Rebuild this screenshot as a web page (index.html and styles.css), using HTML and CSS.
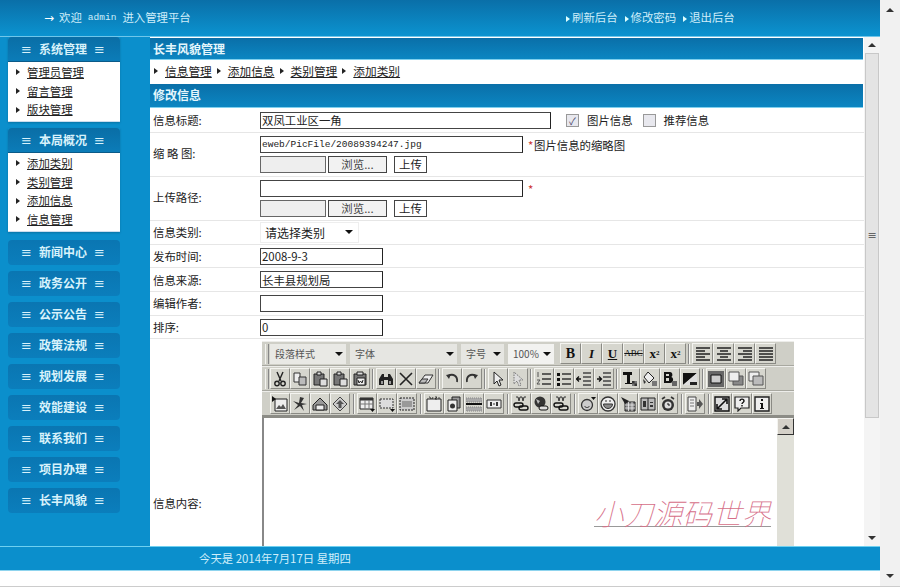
FILE: index.html
```html
<!DOCTYPE html>
<html>
<head>
    <meta charset="utf-8">
    <title>长丰风貌管理</title>
    <link rel="stylesheet" href="styles.css">
</head>
<body>
    <!-- toolbar icons -->
    <svg class="defs" xmlns="http://www.w3.org/2000/svg">
        <symbol id="i-cut" viewBox="0 0 16 16"><path d="M5 1l4 9M11 1l-4 9" fill="none" stroke="#222" stroke-width="1.4"/><circle cx="5" cy="12.5" r="2.2" fill="none" stroke="#222" stroke-width="1.4"/><circle cx="11" cy="12.5" r="2.2" fill="none" stroke="#222" stroke-width="1.4"/></symbol>
        <symbol id="i-copy" viewBox="0 0 16 16"><path d="M2 2h6v9H2z" fill="#eee" stroke="#333"/><path d="M7 6h7v8H7z" fill="#bbb" stroke="#333"/></symbol>
        <symbol id="i-paste" viewBox="0 0 16 16"><path d="M2 3h10v11H2z" fill="#777" stroke="#222"/><path d="M5 1h4v3H5z" fill="#ddd" stroke="#222"/><path d="M8 8h7v7H8z" fill="#ddd" stroke="#222"/></symbol>
        <symbol id="i-pastew" viewBox="0 0 16 16"><path d="M2 3h12v11H2z" fill="#777" stroke="#222"/><path d="M5 1h6v3H5z" fill="#ddd" stroke="#222"/><path d="M5 7h8v7H5z" fill="#eee" stroke="#222"/><path d="M6 9l1 3 1.500-2 1.500 2 1-3" fill="none" stroke="#222"/></symbol>
        <symbol id="i-find" viewBox="0 0 16 16"><path d="M1 14V8l3-5h2v3h4V3h2l3 5v6H10V9H6v5z" fill="#222"/><path d="M3 10h2v3H3zM11 10h2v3h-2z" fill="#999"/></symbol>
        <symbol id="i-del" viewBox="0 0 16 16"><path d="M2 2l12 12M14 2L2 14" stroke="#222" stroke-width="1.600"/></symbol>
        <symbol id="i-erase" viewBox="0 0 16 16"><path d="M1 12l6-8h8l-5 8z" fill="#eee" stroke="#333"/><path d="M1 12l3-4h6l-3 4z" fill="#bbb" stroke="#333"/></symbol>
        <symbol id="i-undo" viewBox="0 0 16 16"><path d="M4 5c5-3 10 0 9 6" fill="none" stroke="#333" stroke-width="1.800"/><path d="M2 4l5-1-2 5z" fill="#333"/></symbol>
        <symbol id="i-redo" viewBox="0 0 16 16"><path d="M12 5C7 2 2 5 3 11" fill="none" stroke="#333" stroke-width="1.800"/><path d="M14 4L9 3l2 5z" fill="#333"/></symbol>
        <symbol id="i-arrow" viewBox="0 0 16 16"><path d="M4 1v12l3-3 2 5 2-1-2-5h4z" fill="#eee" stroke="#222"/></symbol>
        <symbol id="i-arrowd" viewBox="0 0 16 16"><path d="M4 1v12l3-3 2 5 2-1-2-5h4z" fill="#ddd" stroke="#777" stroke-dasharray="1.500 1"/></symbol>
        <symbol id="i-ol" viewBox="0 0 16 16"><path d="M6 3h9M6 8h9M6 13h9" stroke="#333" stroke-width="1.500"/><path d="M2 1v5M1 9h3l-3 4h3" fill="none" stroke="#555"/></symbol>
        <symbol id="i-ul" viewBox="0 0 16 16"><path d="M6 3h9M6 8h9M6 13h9" stroke="#333" stroke-width="1.500"/><path d="M1 2h3v3H1zM1 7h3v3H1zM1 12h3v3H1z" fill="#111"/></symbol>
        <symbol id="i-out" viewBox="0 0 16 16"><path d="M7 2h8M7 6h8M7 10h8M7 14h8" stroke="#444" stroke-width="1.300"/><path d="M5 8L1 8M3 5.500L.5 8 3 10.500" fill="none" stroke="#111" stroke-width="1.300"/></symbol>
        <symbol id="i-in" viewBox="0 0 16 16"><path d="M7 2h8M7 6h8M7 10h8M7 14h8" stroke="#444" stroke-width="1.300"/><path d="M1 8h4M3 5.500L5.500 8 3 10.500" fill="none" stroke="#111" stroke-width="1.300"/></symbol>
        <symbol id="i-tcol" viewBox="0 0 16 16"><path d="M1 1h9v3H8v8h2v1H3v-1h2V4H3v0H1z" fill="#111"/><path d="M10 10h5v5h-5z" fill="#777"/><path d="M10 10h2.500v2.500H10zM12.500 12.500H15V15h-2.500z" fill="#333"/></symbol>
        <symbol id="i-fill" viewBox="0 0 16 16"><path d="M6 1l6 6-5 5-5-6z" fill="#eee" stroke="#222"/><path d="M10 10h5v5h-5z" fill="#777"/><path d="M1 8l1 5 2-2z" fill="#333"/></symbol>
        <symbol id="i-bcol" viewBox="0 0 16 16"><path d="M2 1h6c3 0 3 5 1 5 3 0 3 6-1 6H2zM4 3v2h3V3zM4 7v3h3V7z" fill="#111" fill-rule="evenodd"/><path d="M10 10h5v5h-5z" fill="#666"/></symbol>
        <symbol id="i-bw" viewBox="0 0 16 16"><path d="M1 2h14L1 14z" fill="#111"/><path d="M15 2v12H1z" fill="#ddd"/><path d="M8 11h7v3H8z" fill="#222"/></symbol>
        <symbol id="i-abs" viewBox="0 0 16 16"><path d="M0 0h16v16H0z" fill="#666"/><path d="M3 4h10v8H3z" fill="#ccc" stroke="#111"/></symbol>
        <symbol id="i-front" viewBox="0 0 16 16"><path d="M5 5h10v9H5z" fill="#888" stroke="#555"/><path d="M1 1h10v9H1z" fill="#eee" stroke="#555"/></symbol>
        <symbol id="i-back" viewBox="0 0 16 16"><path d="M1 1h10v9H1z" fill="#eee" stroke="#555"/><path d="M5 5h10v9H5z" fill="#bbb" stroke="#555"/></symbol>
        <symbol id="i-img" viewBox="0 0 16 16"><path d="M3 3h12v12H3z" fill="#eee" stroke="#222"/><path d="M4 13l3-4 2 2 2-3 3 5z" fill="#555"/><path d="M0 0l4 3-4 3z" fill="#111"/></symbol>
        <symbol id="i-flash" viewBox="0 0 16 16"><path d="M8 1l-1 6-6-2 5 4-4 5 6-4 4 5-2-6 5-1-6-1 3-5z" fill="#333"/></symbol>
        <symbol id="i-media" viewBox="0 0 16 16"><path d="M1 9l7-7 7 7v5H1z" fill="#999" stroke="#222"/><path d="M4 9h8v5H4z" fill="#eee" stroke="#222"/></symbol>
        <symbol id="i-up" viewBox="0 0 16 16"><path d="M8 1l7 7-7 7-7-7z" fill="#ccc" stroke="#444"/><path d="M8 4l4 4H9.500v4h-3V8H4z" fill="#555"/></symbol>
        <symbol id="i-table" viewBox="0 0 16 16"><path d="M1 2h13v11H1z" fill="#eee" stroke="#222"/><path d="M1 2h13v2.500H1z" fill="#333"/><path d="M1 8h13M6 4v9M10 4v9" stroke="#777"/><path d="M11 13h5l-2.500 3z" fill="#111"/></symbol>
        <symbol id="i-form" viewBox="0 0 16 16"><path d="M1 3h13v9H1z" fill="#ddd" stroke="#333" stroke-dasharray="2 1"/><path d="M11 13h5l-2.500 3z" fill="#111"/></symbol>
        <symbol id="i-fieldset" viewBox="0 0 16 16"><path d="M1 2h14v12H1z" fill="#ccc" stroke="#222" stroke-dasharray="2 1"/><path d="M3 6h10M3 8h10M3 10h10" stroke="#666"/></symbol>
        <symbol id="i-frame" viewBox="0 0 16 16"><path d="M1 3h14v12H1z" fill="#eee" stroke="#222"/><path d="M3 1h1l1 2M7 1l-1 2M9 1h2l-2 2h2M13 1v2" fill="none" stroke="#222" stroke-width=".8"/></symbol>
        <symbol id="i-doc" viewBox="0 0 16 16"><path d="M6 1h8v11H6z" fill="#999" stroke="#222"/><path d="M2 4h9v11H2z" fill="#eee" stroke="#222"/><circle cx="6.500" cy="10" r="2.500" fill="#333"/></symbol>
        <symbol id="i-hr" viewBox="0 0 16 16"><path d="M0 2h16v4H0z" fill="#aaa" stroke="#888" stroke-dasharray="1 1"/><path d="M0 8h16" stroke="#111" stroke-width="2"/><path d="M0 11h16v4H0z" fill="#aaa" stroke="#888" stroke-dasharray="1 1"/></symbol>
        <symbol id="i-field" viewBox="0 0 16 16"><path d="M1 4h14v8H1z" fill="#eee" stroke="#333"/><path d="M4 6h2v4H4zM10 6h2v4h-2z" fill="#333"/><path d="M7 8h2" stroke="#333"/></symbol>
        <symbol id="i-link" viewBox="0 0 16 16"><path d="M3 1h2l1 4 1-4h2l1 4 1-4h2" fill="none" stroke="#333"/><rect x="1" y="7" width="9" height="4" rx="2" fill="none" stroke="#111" stroke-width="1.400"/><rect x="6" y="10" width="9" height="4" rx="2" fill="none" stroke="#111" stroke-width="1.400"/></symbol>
        <symbol id="i-globe" viewBox="0 0 16 16"><circle cx="7" cy="6" r="5.500" fill="#333"/><path d="M3 3l4 2-2 3z" fill="#bbb"/><rect x="6" y="10" width="9" height="4" rx="2" fill="#ddd" stroke="#111"/></symbol>
        <symbol id="i-emoji" viewBox="0 0 16 16"><circle cx="7" cy="9" r="5.500" fill="#ccc" stroke="#333" stroke-width="1.300"/><path d="M4.500 10c1 2 4 2 5 0" fill="none" stroke="#333"/><path d="M11 1h5l-2.500 3z" fill="#111"/></symbol>
        <symbol id="i-smile" viewBox="0 0 16 16"><circle cx="8" cy="8" r="7" fill="#eee" stroke="#333" stroke-width="1.300"/><path d="M3.500 8h9c0 6-9 6-9 0z" fill="#888" stroke="#333"/><path d="M5 5h2M9 5h2" stroke="#333"/></symbol>
        <symbol id="i-calc" viewBox="0 0 16 16"><path d="M5 6h10v9H5z" fill="#888" stroke="#222"/><path d="M5 9h10M5 12h10M8.500 6v9M12 6v9" stroke="#eee" stroke-width=".8"/><path d="M1 1l8 4-4 3z" fill="#222"/></symbol>
        <symbol id="i-swap" viewBox="0 0 16 16"><path d="M1 2h14v12H1z" fill="#bbb" stroke="#222"/><path d="M8 2v12" stroke="#222"/><path d="M3 5h3v6H3zM10 6h3v1h-3zM10 9h3v2h-3z" fill="#333"/></symbol>
        <symbol id="i-clock" viewBox="0 0 16 16"><circle cx="8" cy="9" r="6" fill="#333"/><circle cx="8" cy="9" r="3.500" fill="#ddd"/><path d="M8 7v2h2" stroke="#111" fill="none"/><path d="M2 3l3-2M14 3l-3-2" stroke="#333" stroke-width="1.600"/></symbol>
        <symbol id="i-export" viewBox="0 0 16 16"><path d="M1 1h8v14H1z" fill="#eee" stroke="#444"/><path d="M3 4h4M3 7h4M3 10h4" stroke="#777"/><path d="M10 6h2V3l4 5-4 5v-3h-2z" fill="#555"/></symbol>
        <symbol id="i-resize" viewBox="0 0 16 16"><path d="M1 1h14v14H1z" fill="#ddd" stroke="#111" stroke-width="1.400"/><path d="M3 13L13 3M8 3h5v5M3 8v5h5" fill="none" stroke="#111" stroke-width="1.600"/></symbol>
        <symbol id="i-help" viewBox="0 0 16 16"><path d="M1 1h14v11H7l-3 3v-3H1z" fill="#eee" stroke="#222" stroke-width="1.200"/><path d="M6 5c0-2.500 4-2.500 4 0 0 1.500-2 1.500-2 3M8 9v1.500" fill="none" stroke="#111" stroke-width="1.400"/></symbol>
        <symbol id="i-info" viewBox="0 0 16 16"><path d="M1 1h14v14H1z" fill="#eee" stroke="#222" stroke-width="1.400"/><path d="M7 3h2v2H7zM6 7h3v5h1v1H6v-1h1V8H6z" fill="#111"/></symbol>
        <symbol id="i-left" viewBox="0 0 16 16"><path d="M1 2h14M1 5h9M1 8h14M1 11h9M1 14h14" stroke="#222" stroke-width="1.400"/></symbol>
        <symbol id="i-center" viewBox="0 0 16 16"><path d="M1 2h14M4 5h8M1 8h14M4 11h8M1 14h14" stroke="#222" stroke-width="1.400"/></symbol>
        <symbol id="i-right" viewBox="0 0 16 16"><path d="M1 2h14M6 5h9M1 8h14M6 11h9M1 14h14" stroke="#222" stroke-width="1.400"/></symbol>
        <symbol id="i-just" viewBox="0 0 16 16"><path d="M1 2h14M1 5h14M1 8h14M1 11h14M1 14h14" stroke="#222" stroke-width="1.400"/></symbol>
    </svg>

    <div class="window">
        <div class="page">
            <div class="topbar">
                <div class="welcome"><span class="welcome-arrow">→</span>欢迎<span class="latin">admin</span>进入管理平台</div>
                <div class="toplinks">
                    <a class="toplink">刷新后台</a>
                    <a class="toplink">修改密码</a>
                    <a class="toplink">退出后台</a>
                </div>
            </div>

            <div class="main">
                <div class="sidebar">
                    <div class="menu">
                        <div class="menu-head"><span>≡</span><b>系统管理</b><span>≡</span></div>
                        <ul class="menu-list">
                            <li><a>管理员管理</a></li>
                            <li><a>留言管理</a></li>
                            <li><a>版块管理</a></li>
                        </ul>
                    </div>
                    <div class="menu">
                        <div class="menu-head"><span>≡</span><b>本局概况</b><span>≡</span></div>
                        <ul class="menu-list">
                            <li><a>添加类别</a></li>
                            <li><a>类别管理</a></li>
                            <li><a>添加信息</a></li>
                            <li><a>信息管理</a></li>
                        </ul>
                    </div>
                    <div class="menu-head closed"><span>≡</span><b>新闻中心</b><span>≡</span></div>
                    <div class="menu-head closed"><span>≡</span><b>政务公开</b><span>≡</span></div>
                    <div class="menu-head closed"><span>≡</span><b>公示公告</b><span>≡</span></div>
                    <div class="menu-head closed"><span>≡</span><b>政策法规</b><span>≡</span></div>
                    <div class="menu-head closed"><span>≡</span><b>规划发展</b><span>≡</span></div>
                    <div class="menu-head closed"><span>≡</span><b>效能建设</b><span>≡</span></div>
                    <div class="menu-head closed"><span>≡</span><b>联系我们</b><span>≡</span></div>
                    <div class="menu-head closed"><span>≡</span><b>项目办理</b><span>≡</span></div>
                    <div class="menu-head closed"><span>≡</span><b>长丰风貌</b><span>≡</span></div>
                </div>

                <div class="panel">
                    <div class="panel-title">长丰风貌管理</div>
                    <div class="crumbs">
                        <a>信息管理</a>
                        <a>添加信息</a>
                        <a>类别管理</a>
                        <a>添加类别</a>
                    </div>
                    <div class="panel-title section">修改信息</div>

                    <div class="row row-title">
                        <label>信息标题:</label>
                        <div class="line">
                            <input class="input input-title" type="text" value="双凤工业区一角">
                            <span class="check checked">✓</span><span class="check-text">图片信息</span>
                            <span class="check"></span><span class="check-text">推荐信息</span>
                        </div>
                    </div>
                    <div class="row row-upload">
                        <label class="spaced">缩 略 图:</label>
                        <div class="field">
                            <div class="line">
                                <input class="input input-path mono" type="text" value="eweb/PicFile/20089394247.jpg">
                                <span class="star">*</span><span>图片信息的缩略图</span>
                            </div>
                            <div class="line upload">
                                <span class="file-box"></span><span class="btn browse">浏览...</span><span class="btn send">上传</span>
                            </div>
                        </div>
                    </div>
                    <div class="row row-upload">
                        <label>上传路径:</label>
                        <div class="field">
                            <div class="line">
                                <input class="input input-path" type="text">
                                <span class="star">*</span>
                            </div>
                            <div class="line upload">
                                <span class="file-box"></span><span class="btn browse">浏览...</span><span class="btn send">上传</span>
                            </div>
                        </div>
                    </div>
                    <div class="row">
                        <label>信息类别:</label>
                        <div class="field"><span class="select">请选择类别<i class="caret"></i></span></div>
                    </div>
                    <div class="row">
                        <label>发布时间:</label>
                        <div class="field"><input class="input input-short" type="text" value="2008-9-3"></div>
                    </div>
                    <div class="row">
                        <label>信息来源:</label>
                        <div class="field"><input class="input input-short" type="text" value="长丰县规划局"></div>
                    </div>
                    <div class="row">
                        <label>编辑作者:</label>
                        <div class="field"><input class="input input-short" type="text"></div>
                    </div>
                    <div class="row">
                        <label>排序:</label>
                        <div class="field"><input class="input input-short" type="text" value="0"></div>
                    </div>

                    <div class="row row-editor">
                        <label>信息内容:</label>
                        <div class="editor">
                            <div class="tb tb-first">
                                <span class="grip"></span>
                                <span class="tb-select s1">段落样式<i class="caret"></i></span>
                                <span class="tb-select s2">字体<i class="caret"></i></span>
                                <span class="tb-select s3">字号<i class="caret"></i></span>
                                <span class="tb-select s4">100%<i class="caret"></i></span>
                                <span class="tool txt bold">B</span>
                                <span class="tool txt ital">I</span>
                                <span class="tool txt under">U</span>
                                <span class="tool txt strike">ABC</span>
                                <span class="tool txt sup">x<sup>2</sup></span>
                                <span class="tool txt sup">x<sub>2</sub></span>
                                <span class="sep"></span>
                                <span class="tool"><svg><use href="#i-left"/></svg></span>
                                <span class="tool"><svg><use href="#i-center"/></svg></span>
                                <span class="tool"><svg><use href="#i-right"/></svg></span>
                                <span class="tool"><svg><use href="#i-just"/></svg></span>
                            </div>
                            <div class="tb tb-second">
                                <span class="grip"></span>
                                <span class="tool"><svg><use href="#i-cut"/></svg></span>
                                <span class="tool"><svg><use href="#i-copy"/></svg></span>
                                <span class="tool"><svg><use href="#i-paste"/></svg></span>
                                <span class="tool"><svg><use href="#i-paste"/></svg></span>
                                <span class="tool"><svg><use href="#i-pastew"/></svg></span>
                                <span class="sep"></span>
                                <span class="tool"><svg><use href="#i-find"/></svg></span>
                                <span class="tool"><svg><use href="#i-del"/></svg></span>
                                <span class="tool"><svg><use href="#i-erase"/></svg></span>
                                <span class="sep"></span>
                                <span class="tool"><svg><use href="#i-undo"/></svg></span>
                                <span class="tool"><svg><use href="#i-redo"/></svg></span>
                                <span class="sep"></span>
                                <span class="tool"><svg><use href="#i-arrow"/></svg></span>
                                <span class="tool"><svg><use href="#i-arrowd"/></svg></span>
                                <span class="sep"></span>
                                <span class="tool"><svg><use href="#i-ol"/></svg></span>
                                <span class="tool"><svg><use href="#i-ul"/></svg></span>
                                <span class="tool"><svg><use href="#i-out"/></svg></span>
                                <span class="tool"><svg><use href="#i-in"/></svg></span>
                                <span class="sep"></span>
                                <span class="tool"><svg><use href="#i-tcol"/></svg></span>
                                <span class="tool"><svg><use href="#i-fill"/></svg></span>
                                <span class="tool"><svg><use href="#i-bcol"/></svg></span>
                                <span class="tool"><svg><use href="#i-bw"/></svg></span>
                                <span class="sep"></span>
                                <span class="tool"><svg><use href="#i-abs"/></svg></span>
                                <span class="tool"><svg><use href="#i-front"/></svg></span>
                                <span class="tool"><svg><use href="#i-back"/></svg></span>
                            </div>
                            <div class="tb tb-third">
                                <span class="tool"><svg><use href="#i-img"/></svg></span>
                                <span class="tool"><svg><use href="#i-flash"/></svg></span>
                                <span class="tool"><svg><use href="#i-media"/></svg></span>
                                <span class="tool"><svg><use href="#i-up"/></svg></span>
                                <span class="sep"></span>
                                <span class="tool"><svg><use href="#i-table"/></svg></span>
                                <span class="tool"><svg><use href="#i-form"/></svg></span>
                                <span class="tool"><svg><use href="#i-fieldset"/></svg></span>
                                <span class="sep"></span>
                                <span class="tool"><svg><use href="#i-frame"/></svg></span>
                                <span class="tool"><svg><use href="#i-doc"/></svg></span>
                                <span class="tool"><svg><use href="#i-hr"/></svg></span>
                                <span class="tool"><svg><use href="#i-field"/></svg></span>
                                <span class="sep"></span>
                                <span class="tool"><svg><use href="#i-link"/></svg></span>
                                <span class="tool"><svg><use href="#i-globe"/></svg></span>
                                <span class="tool"><svg><use href="#i-link"/></svg></span>
                                <span class="sep"></span>
                                <span class="tool"><svg><use href="#i-emoji"/></svg></span>
                                <span class="tool"><svg><use href="#i-smile"/></svg></span>
                                <span class="tool"><svg><use href="#i-calc"/></svg></span>
                                <span class="tool"><svg><use href="#i-swap"/></svg></span>
                                <span class="tool"><svg><use href="#i-clock"/></svg></span>
                                <span class="sep"></span>
                                <span class="tool"><svg><use href="#i-export"/></svg></span>
                                <span class="sep"></span>
                                <span class="tool"><svg><use href="#i-resize"/></svg></span>
                                <span class="tool"><svg><use href="#i-help"/></svg></span>
                                <span class="tool"><svg><use href="#i-info"/></svg></span>
                            </div>
                            <div class="edit-area">
                                <div class="edit-text"></div>
                                <div class="edit-scroll"><span class="sb-btn"><i class="up"></i></span></div>
                            </div>
                            <div class="watermark">小刀源码世界</div>
                        </div>
                    </div>
                </div>

                <div class="panel-scroll">
                    <span class="sb-arrow"><i class="up"></i></span>
                    <div class="sb-thumb">≡</div>
                    <div class="sb-track"></div>
                    <span class="sb-arrow"><i class="down"></i></span>
                </div>
            </div>

            <div class="footer">今天是 2014年7月17日 星期四</div>
            <div class="strip"></div>
        </div>

        <div class="page-scroll">
            <span class="sb-arrow"><i class="up"></i></span>
            <span class="sb-arrow"><i class="down"></i></span>
        </div>
    </div>
</body>
</html>
```

FILE: styles.css
```css
* {
    box-sizing: border-box;
}

html, body {
    margin: 0;
    padding: 0;
    height: 587px;
    overflow: hidden;
}

body {
    font-family: "Noto Sans CJK SC", "Liberation Sans", sans-serif;
    font-size: 11.4px;
    color: #222;
    background-color: #fff;
}

.defs {
    position: absolute;
    width: 0;
    height: 0;
}

.window {
    display: flex;
    height: 586px;
    border-bottom: 1px solid #ccc;
    box-sizing: content-box;
}

.page {
    width: 880px;
    display: flex;
    flex-direction: column;
}

.page-scroll {
    width: 20px;
    background-color: #f1f1f1;
    display: flex;
    flex-direction: column;
    justify-content: space-between;
    align-items: center;
    padding: 2px 0;
}

/* top bar */
.topbar {
    height: 37px;
    background: linear-gradient(#0a6fa8, #0b93d0);
    border-bottom: 1px solid #6fc6ea;
    display: flex;
    align-items: center;
    color: #cfeefa;
    padding-left: 44px;
    line-height: 1;
}

.welcome {
    width: 522px;
    display: flex;
    align-items: center;
}

.welcome-arrow {
    font-family: "DejaVu Sans", sans-serif;
    color: #fff;
    font-size: 12px;
    margin-right: 5px;
}

.latin {
    font-family: "Liberation Mono", monospace;
    font-size: 9.5px;
    margin: 0 6px;
}

.toplinks {
    display: flex;
    gap: 7px;
}

.toplink::before {
    content: "";
    display: inline-block;
    border-left: 4px solid #dff;
    border-top: 3px solid transparent;
    border-bottom: 3px solid transparent;
    margin-right: 2px;
}

/* main area */
.main {
    height: 509px;
    display: flex;
    background-color: #0b8fcc;
    overflow: hidden;
}

.sidebar {
    width: 150px;
    padding: 0 30px 0 8px;
    flex-shrink: 0;
}

.menu {
    margin-bottom: 6px;
    box-shadow: 0 1px 2px rgba(0, 0, 0, 0.2);
}

.menu + .menu {
    margin-bottom: 8px;
}

.menu-head {
    height: 24px;
    background: linear-gradient(#0a6ea6, #0b7cb8);
    border-radius: 4px 4px 0 0;
    color: #d8f2fb;
    display: flex;
    justify-content: space-between;
    align-items: center;
    padding: 0 15px 0 13px;
    line-height: 1;
    font-size: 12px;
}

.menu-head span {
    font-family: "DejaVu Sans", sans-serif;
    font-size: 13px;
}

.menu-head.closed {
    height: 25px;
    border-radius: 4px;
    margin-bottom: 6px;
    background: linear-gradient(#0a76b2, #0b7ebc);
}

.menu-list {
    list-style-type: none;
    margin: 0;
    padding: 1px 0 2px 8px;
    background-color: #fff;
    border-top: 1px solid #0a5a88;
    border-bottom: 1px solid #cde;
}

.menu-list li {
    height: 18.7px;
    line-height: 18.7px;
    display: flex;
    align-items: center;
}

.menu-list li::before {
    content: "";
    border-left: 4px solid #222;
    border-top: 3px solid transparent;
    border-bottom: 3px solid transparent;
    margin-right: 7px;
}

a {
    color: #222;
    text-decoration: underline;
}

.toplink {
    color: #cfeefa;
    text-decoration: none;
}

/* content panel */
.panel {
    width: 714px;
    background-color: #fff;
    flex-shrink: 0;
    overflow: hidden;
    padding-top: 1px;
}

.panel-title {
    height: 22px;
    background: linear-gradient(#0a6fa8, #0b86c2);
    border-bottom: 1px solid #7fd0ee;
    color: #e4f6fc;
    font-weight: bold;
    font-size: 12px;
    line-height: 21px;
    padding-left: 3px;
    margin-right: 1px;
}

.panel-title.section {
    height: 24px;
    line-height: 22px;
}

.crumbs {
    height: 24px;
    display: flex;
    align-items: center;
    gap: 5px;
    padding-left: 4px;
    padding-bottom: 2px;
    font-size: 11.7px;
}

.crumbs a {
    display: flex;
    align-items: center;
    line-height: 1.3;
}

.crumbs a::before {
    content: "";
    border-left: 4px solid #222;
    border-top: 3px solid transparent;
    border-bottom: 3px solid transparent;
    margin-right: 7px;
}

.row {
    display: flex;
    align-items: center;
    height: 23.7px;
    border-bottom: 1px solid #e6e6e6;
    padding-left: 3px;
}

.row-title {
    height: 25px;
}

.row-upload {
    height: 44px;
}

.row-upload label {
    margin-bottom: 4px;
}

.row label {
    width: 107px;
    flex-shrink: 0;
}

.field {
    display: flex;
    flex-direction: column;
    gap: 3px;
}

.line {
    display: flex;
    flex-direction: row;
    align-items: center;
}

.input {
    height: 17px;
    border: 1px solid #444;
    border-right-color: #222;
    padding: 0 1px;
    font-family: inherit;
    font-size: 11.4px;
    color: #222;
    background-color: #fff;
}

.input-title {
    width: 291px;
}

.input-path {
    width: 263px;
}

.input-short {
    width: 123px;
}

.mono {
    font-family: "Liberation Mono", monospace;
    font-size: 9.5px;
}

.star {
    color: #c33;
    margin: 0 0 0 5px;
    width: 6px;
}

.check {
    width: 13px;
    height: 13px;
    margin-left: 15px;
    border: 1px solid #999;
    background-color: #e8e8ee;
    font-size: 10px;
    line-height: 11px;
    text-align: center;
    color: #446;
}

.check-text {
    margin-left: 8px;
    margin-right: -5px;
}

.upload {
    gap: 2px;
}

.file-box {
    width: 66px;
    height: 17px;
    border: 1px solid #666;
    background-color: #eee;
}

.btn {
    height: 17px;
    border: 1px solid #444;
    background-color: #f2f2f2;
    line-height: 15px;
    text-align: center;
}

.browse {
    width: 59px;
    color: #444;
}

.send {
    width: 33px;
    margin-left: 5px;
    background-color: #fff;
}

.select {
    width: 99px;
    height: 21px;
    border: 1px solid #eee;
    display: flex;
    align-items: center;
    justify-content: space-between;
    padding: 0 5px 0 4px;
    font-size: 12px;
    background-color: #fff;
}

.caret {
    border-top: 4px solid #111;
    border-left: 4px solid transparent;
    border-right: 4px solid transparent;
}

/* editor */
.row-editor {
    height: 330px;
    align-items: flex-start;
    border-bottom: none;
    padding-left: 3px;
}

.row-editor label {
    margin-top: 156px;
    width: 109px;
}

.editor {
    width: 532px;
    position: relative;
    background-color: #cfcfc7;
    flex-shrink: 0;
    margin-top: 2px;
}

.tb {
    height: 25px;
    display: flex;
    align-items: center;
    border-bottom: 1px solid #a8a8a0;
    border-top: 1px solid #ededea;
}

.tb-first {
    padding-left: 3px;
}

.tb-second {
    padding-left: 3px;
}

.tb-third {
    padding-left: 8px;
    height: 27px;
    border-bottom: 3px solid #8c8c86;
}

.grip {
    width: 4px;
    height: 20px;
    border-left: 1px solid #f4f4f0;
    border-right: 1px solid #888;
    margin-right: 1px;
}

.tb-select {
    height: 20px;
    background-color: #e6e6e2;
    margin-right: 4px;
    display: flex;
    align-items: center;
    justify-content: space-between;
    padding: 0 3px 0 5px;
    color: #555;
    font-size: 10px;
}

.s1 {
    width: 76px;
    background-color: #e9e9e5;
}

.s2 {
    width: 107px;
}

.s3 {
    width: 43px;
}

.s4 {
    width: 46px;
    background-color: #f2f2f0;
    margin-right: 6px;
}

.tool {
    width: 20px;
    height: 21px;
    display: flex;
    align-items: center;
    justify-content: center;
    flex-shrink: 0;
    background-color: #d6d6ce;
    border: 1px solid;
    border-color: #f4f4f0 #8a8a84 #8a8a84 #f4f4f0;
}

.tool svg {
    width: 16px;
    height: 16px;
    display: block;
}

.tb-first .tool {
    width: 21px;
}

.txt {
    font-family: "Liberation Serif", serif;
    color: #111;
    font-size: 13px;
    line-height: 1;
}

.bold {
    font-weight: bold;
    font-size: 14px;
}

.ital {
    font-style: italic;
    font-weight: bold;
}

.under {
    text-decoration: underline;
    font-weight: bold;
}

.strike {
    font-size: 9px;
    text-decoration: line-through;
}

.sup {
    font-weight: bold;
}

.sup sup, .sup sub {
    font-size: 7px;
}

.sep {
    width: 2px;
    height: 20px;
    margin: 0 2px;
    border-left: 1px solid #888;
    border-right: 1px solid #f4f4f0;
    flex-shrink: 0;
}

.tb-third .sep {
    margin: 0 2.5px;
}

.edit-area {
    height: 130px;
    display: flex;
    background-color: #fff;
    border-left: 2px solid #888;
}

.edit-text {
    flex: 1;
}

.edit-scroll {
    width: 17px;
    background-color: #e0e0d8;
}

.sb-btn {
    display: flex;
    align-items: center;
    justify-content: center;
    height: 17px;
    background-color: #d4d0c8;
    border: 1px solid;
    border-color: #f4f4f0 #333 #333 #f4f4f0;
}

.up {
    border-bottom: 4px solid #333;
    border-left: 4px solid transparent;
    border-right: 4px solid transparent;
}

.down {
    border-top: 4px solid #333;
    border-left: 4px solid transparent;
    border-right: 4px solid transparent;
}

.watermark {
    position: absolute;
    left: 332px;
    top: 155px;
    font-size: 29.5px;
    line-height: 32px;
    font-style: italic;
    font-weight: 100;
    color: #d66e88;
    text-decoration: underline;
    text-decoration-color: #999;
    text-decoration-thickness: 1px;
    white-space: nowrap;
}

/* scrollbars */
.panel-scroll {
    width: 16px;
    background-color: #f4f4f4;
    display: flex;
    flex-direction: column;
    align-items: center;
    height: 509px;
    flex-shrink: 0;
}

.sb-arrow {
    height: 16px;
    display: flex;
    align-items: center;
    justify-content: center;
}

.sb-thumb {
    width: 14px;
    height: 365px;
    background-color: #e4e4e4;
    border: 1px solid #c8c8c8;
    display: flex;
    align-items: center;
    justify-content: center;
    color: #666;
    font-size: 11px;
    font-family: "DejaVu Sans", sans-serif;
}

.sb-track {
    flex: 1;
}

/* footer */
.footer {
    height: 24px;
    background-color: #0b8fcc;
    border-top: 1px solid #6fd0f0;
    color: #cfeefa;
    padding-left: 199px;
    line-height: 22px;
}

.strip {
    flex: 1;
    background-color: #fff;
    border-top: 1px solid #8fd4ee;
}
```
